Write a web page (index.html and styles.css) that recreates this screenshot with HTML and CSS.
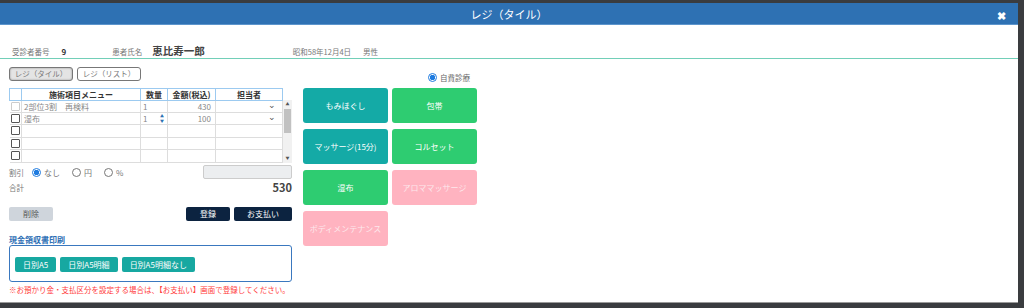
FILE: index.html
```html
<!DOCTYPE html>
<html lang="ja">
<head>
  <meta charset="UTF-8">
  <title>レジ（タイル）</title>
  <link rel="stylesheet" href="styles.css">
</head>
<body>
  <div class="modal">
    <div class="modal-header">
      <span class="modal-title">レジ（タイル）</span>
      <span class="modal-close">&#10006;</span>
    </div>

    <div class="patient-info">
      <span class="label">受診者番号</span>
      <span class="patient-no">9</span>
      <span class="label name-label">患者氏名</span>
      <span class="patient-name">恵比寿一郎</span>
      <span class="label birth">昭和58年12月4日</span>
      <span class="label">男性</span>
    </div>

    <div class="content">
      <div class="left">
        <div class="tabs">
          <button class="tab active">レジ（タイル）</button>
          <button class="tab">レジ（リスト）</button>
        </div>

        <div class="grid-wrap">
          <table class="menu-table">
            <thead>
              <tr>
                <th class="c-check"></th>
                <th class="c-menu">施術項目メニュー</th>
                <th class="c-qty">数量</th>
                <th class="c-price">金額(税込)</th>
                <th class="c-staff">担当者</th>
              </tr>
            </thead>
            <tbody>
              <tr class="locked">
                <td><span class="check disabled"></span></td>
                <td>2部位3割　再検料</td>
                <td>1</td>
                <td class="num">430</td>
                <td class="sel"><span class="caret">&#8964;</span></td>
              </tr>
              <tr>
                <td><span class="check"></span></td>
                <td>湿布</td>
                <td class="qty">1<span class="spin"><i>&#9650;</i><i>&#9660;</i></span></td>
                <td class="num">100</td>
                <td class="sel"><span class="caret">&#8964;</span></td>
              </tr>
              <tr><td><span class="check"></span></td><td></td><td></td><td></td><td></td></tr>
              <tr><td><span class="check"></span></td><td></td><td></td><td></td><td></td></tr>
              <tr class="cut"><td><span class="check"></span></td><td></td><td></td><td></td><td></td></tr>
            </tbody>
          </table>
          <div class="scrollbar">
            <span class="arrow">&#9650;</span>
            <span class="thumb"></span>
            <span class="arrow down">&#9660;</span>
          </div>
        </div>

        <div class="discount">
          <span class="label">割引</span>
          <label class="radio"><span class="dot on"></span>なし</label>
          <label class="radio"><span class="dot"></span>円</label>
          <label class="radio"><span class="dot"></span>%</label>
          <span class="discount-input"></span>
        </div>

        <div class="total">
          <span class="label">合計</span>
          <span class="total-value">530</span>
        </div>

        <div class="actions">
          <button class="btn btn-delete">削除</button>
          <span class="spacer"></span>
          <button class="btn btn-dark">登録</button>
          <button class="btn btn-dark wide">お支払い</button>
        </div>

        <div class="receipt-title">現金領収書印刷</div>
        <div class="receipt-box">
          <button class="btn btn-teal">日別A5</button>
          <button class="btn btn-teal">日別A5明細</button>
          <button class="btn btn-teal">日別A5明細なし</button>
        </div>
        <div class="note">※お預かり金・支払区分を設定する場合は、【お支払い】画面で登録してください。</div>
      </div>

      <div class="right">
        <div class="insurance">
          <label class="radio"><span class="dot on"></span>自費診療</label>
        </div>
        <div class="tiles">
          <div class="tile teal">もみほぐし</div>
          <div class="tile green">包帯</div>
          <div class="tile teal">マッサージ(15分)</div>
          <div class="tile green">コルセット</div>
          <div class="tile green">湿布</div>
          <div class="tile pink">アロママッサージ</div>
          <div class="tile pink">ボディメンテナンス</div>
        </div>
      </div>
    </div>
  </div>
</body>
</html>
```

FILE: styles.css
```css
/* ベース */
body {
  margin: 0;
  background-color: #3a3c3f;
  font-family: "Noto Sans CJK JP", "Noto Sans", sans-serif;
  font-size: 8px;
  color: #555;
  height: 308px;
  overflow: hidden;
}
button {
  font-family: inherit;
}
.modal {
  margin-top: 3px;
  width: 1018px;
  height: 299px;
  background-color: #fff;
  border-bottom: 1px solid #9a9a9a;
}
.modal-header {
  height: 21px;
  background-color: #2e71b3;
  border-bottom: 1px solid #5d95cc;
  display: flex;
  align-items: center;
  justify-content: center;
  position: relative;
  color: #fff;
}
.modal-title {
  font-size: 11px;
}
.modal-close {
  position: absolute;
  right: 12px;
  top: 4px;
  font-size: 11px;
  font-weight: bold;
}
.label {
  color: #777;
  font-size: 7.5px;
}
.patient-info {
  display: flex;
  align-items: baseline;
  height: 34px;
  box-sizing: border-box;
  padding: 18px 0 0 12px;
  border-bottom: 1px solid #72cfb8;
}
.patient-no {
  margin-left: 12px;
  font-weight: bold;
  color: #333;
}
.name-label {
  margin-left: 46px;
}
.patient-name {
  margin-left: 10px;
  font-size: 10.5px;
  font-weight: bold;
  color: #444;
}
.birth {
  margin-left: 88px;
  margin-right: 12px;
}
.content {
  display: flex;
  padding-left: 9px;
}
.left {
  width: 283px;
}
.tabs {
  display: flex;
  gap: 4px;
  padding-top: 8px;
  height: 29px;
  box-sizing: border-box;
}
.tab {
  width: 64px;
  height: 14px;
  padding: 0;
  font-size: 7.5px;
  color: #777;
  background-color: #fff;
  border: 1px solid #777;
  border-radius: 3px;
  line-height: 12px;
}
.tab.active {
  background-color: #e4e4e4;
  box-shadow: inset 0 0 2px #888;
}
.grid-wrap {
  display: flex;
  width: 283px;
  height: 75px;
  overflow: hidden;
}
.menu-table {
  width: 274px;
  border-collapse: collapse;
  table-layout: fixed;
  border-top: 1px solid #9ccaf0;
}
.menu-table th {
  height: 11px;
  padding: 0;
  font-size: 8px;
  font-weight: bold;
  color: #333;
  border: 1px solid #9ccaf0;
  border-top: none;
}
.menu-table td {
  height: 11px;
  padding: 0 2px;
  font-size: 8px;
  color: #888;
  border: 1px solid #ddd;
  border-top: none;
  white-space: nowrap;
  position: relative;
}
.menu-table td:first-child {
  padding: 0 1px;
  border-left: none;
}
.c-check { width: 11px; border-left: 1px solid #9ccaf0 !important; }
.c-menu { width: 118px; }
.c-qty { width: 26px; }
.c-price { width: 47px; }
.menu-table .num {
  text-align: right;
  padding-right: 4px;
}
.menu-table .sel {
  text-align: right;
  padding-right: 6px;
}
.caret {
  font-size: 9px;
  color: #555;
  line-height: 8px;
  position: relative;
  top: -2px;
}
.check {
  display: block;
  width: 7px;
  height: 7px;
  border: 1px solid #555;
  border-radius: 1px;
}
.check.disabled {
  border-color: #ccc;
}
.spin {
  position: absolute;
  right: 3px;
  top: 1px;
  display: flex;
  flex-direction: column;
  color: #2e71b3;
  font-size: 4px;
  line-height: 5px;
}
.spin i {
  font-style: normal;
}
.cut td {
  height: 12px;
}
.scrollbar {
  width: 9px;
  margin-top: 12px;
  background-color: #f1f1f1;
  display: flex;
  flex-direction: column;
  align-items: center;
  font-size: 4px;
  color: #555;
}
.scrollbar .arrow {
  height: 9px;
  line-height: 9px;
}
.scrollbar .thumb {
  width: 7px;
  height: 24px;
  background-color: #c1c1c1;
}
.scrollbar .down {
  margin-top: auto;
}
.discount {
  display: flex;
  align-items: center;
  height: 16px;
  margin-top: 1px;
}
.radio {
  display: flex;
  align-items: center;
  gap: 3px;
  font-size: 8px;
  color: #777;
}
.discount .radio {
  margin-left: 8px;
  width: 24px;
}
.discount .radio:first-of-type {
  margin-left: 8px;
  width: 32px;
}
.dot {
  width: 7px;
  height: 7px;
  border: 1px solid #777;
  border-radius: 50%;
  box-sizing: content-box;
  display: inline-block;
}
.dot.on {
  border-color: #1e7be0;
  background: radial-gradient(circle, #1e7be0 0 2.5px, #fff 3px);
}
.discount-input {
  margin-left: auto;
  width: 87px;
  height: 12px;
  background-color: #eceef0;
  border: 1px solid #ccc;
  border-radius: 2px;
}
.total {
  display: flex;
  align-items: center;
  justify-content: space-between;
  height: 14px;
}
.total-value {
  font-size: 11px;
  font-weight: bold;
  color: #444;
  line-height: 14px;
}
.actions {
  display: flex;
  gap: 4px;
  margin-top: 13px;
}
.spacer {
  flex: 1;
}
.btn {
  height: 14px;
  padding: 0;
  border: none;
  border-radius: 2px;
  font-size: 8px;
  line-height: 14px;
  cursor: pointer;
}
.btn-delete {
  width: 44px;
  background-color: #cfd5dc;
  color: #555;
}
.btn-dark {
  width: 44px;
  background-color: #0c2340;
  color: #fff;
}
.btn-dark.wide {
  width: 58px;
}
.receipt-title {
  margin-top: 14px;
  font-size: 8px;
  line-height: 10px;
  font-weight: bold;
  color: #2e6fb5;
}
.receipt-box {
  display: flex;
  gap: 4px;
  height: 37px;
  box-sizing: border-box;
  padding: 11px 0 0 5px;
  border: 1px solid #3a78bf;
  border-radius: 3px;
}
.btn-teal {
  height: 15px;
  padding: 0 8px;
  background-color: #17a8a1;
  color: #fff;
}
.note {
  margin-top: 2px;
  font-size: 7.5px;
  line-height: 12px;
  color: #ff3b3b;
  white-space: nowrap;
}
.right {
  margin-left: 11px;
  width: 174px;
}
.insurance {
  display: flex;
  justify-content: flex-end;
  padding: 8px 7px 0 0;
  height: 29px;
  box-sizing: border-box;
}
.insurance .radio {
  color: #666;
  font-size: 7.5px;
}
.tiles {
  display: grid;
  grid-template-columns: 85px 85px;
  grid-auto-rows: 35px;
  column-gap: 4px;
  row-gap: 6px;
}
.tile {
  display: flex;
  align-items: center;
  justify-content: center;
  border-radius: 3px;
  font-size: 8px;
  color: #fff;
}
.tile.teal {
  background-color: #14aaa6;
}
.tile.green {
  background-color: #2ecc71;
}
.tile.pink {
  background-color: #ffb3c0;
  color: #fde8ec;
}
```
